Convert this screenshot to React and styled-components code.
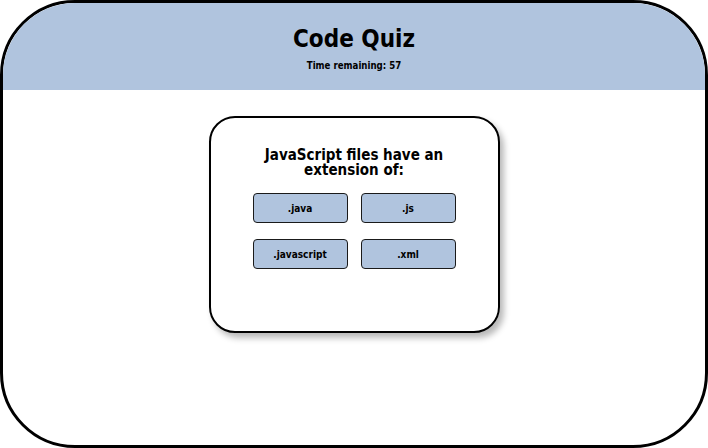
import React, { useState } from 'react';
import styled, { createGlobalStyle } from 'styled-components';

const GlobalStyle = createGlobalStyle`
  html, body {
    margin: 0;
    padding: 0;
    background: #ffffff;
  }
  body {
    font-family: 'DejaVu Sans Condensed', 'DejaVu Sans', sans-serif;
    color: #000000;
  }
`;

const Frame = styled.div`
  box-sizing: border-box;
  width: 708px;
  height: 448px;
  border: 3px solid #000000;
  border-radius: 75px;
  overflow: hidden;
  background: #ffffff;
  display: flex;
  flex-direction: column;
`;

const Header = styled.header`
  height: 87px;
  background-color: #b0c4de;
  display: flex;
  flex-direction: column;
  align-items: center;
  h1 {
    margin: 22px 0 0;
    font-size: 24px;
    font-weight: bold;
    line-height: 28px;
  }
  p {
    margin: 7px 0 0;
    font-size: 9.6px;
    font-weight: bold;
  }
`;

const Main = styled.main`
  display: flex;
  justify-content: center;
  padding-top: 26px;
`;

const Card = styled.section`
  box-sizing: border-box;
  width: 291px;
  height: 217px;
  border: 2px solid #000000;
  border-radius: 26px;
  box-shadow: 4px 5px 6px rgba(0, 0, 0, 0.28);
  display: flex;
  flex-direction: column;
  align-items: center;
  h2 {
    width: 200px;
    margin: 30px 0 0;
    font-size: 15px;
    line-height: 15px;
    font-weight: bold;
    text-align: center;
  }
`;

const Choices = styled.div`
  display: grid;
  grid-template-columns: 95px 95px;
  column-gap: 13px;
  row-gap: 16px;
  margin-top: 15px;
`;

const Choice = styled.button`
  box-sizing: border-box;
  height: 30px;
  border: 1.5px solid #1a1a1a;
  border-radius: 4px;
  background: ${(p) => (p.picked ? '#9fb5d3' : '#b0c4de')};
  font-family: inherit;
  font-size: 10px;
  font-weight: bold;
  color: #000000;
  cursor: pointer;
  padding: 0;
`;

const answers = ['.java', '.js', '.javascript', '.xml'];

const App = () => {
  const [picked, setPicked] = useState(null);
  return (
    <>
      <GlobalStyle />
      <Frame>
        <Header>
          <h1>Code Quiz</h1>
          <p>Time remaining: 57</p>
        </Header>
        <Main>
          <Card>
            <h2>JavaScript files have an extension of:</h2>
            <Choices>
              {answers.map((a) => (
                <Choice key={a} picked={picked === a} onClick={() => setPicked(a)}>
                  {a}
                </Choice>
              ))}
            </Choices>
          </Card>
        </Main>
      </Frame>
    </>
  );
};

export default App;
